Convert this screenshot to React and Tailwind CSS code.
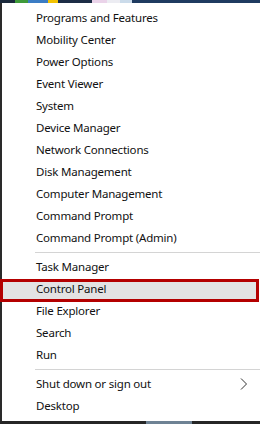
const groups = [
  [
    'Programs and Features',
    'Mobility Center',
    'Power Options',
    'Event Viewer',
    'System',
    'Device Manager',
    'Network Connections',
    'Disk Management',
    'Computer Management',
    'Command Prompt',
    'Command Prompt (Admin)',
  ],
  ['Task Manager', 'Control Panel', 'File Explorer', 'Search', 'Run'],
  ['Shut down or sign out', 'Desktop'],
];

const strip = [
  ['w-[15px]', 'bg-[#1b2a3c]'],
  ['w-[13px]', 'bg-[#3f9a3a]'],
  ['w-[20px]', 'bg-[#3b7cc4]'],
  ['w-[10px]', 'bg-[#f2c200]'],
  ['w-[34px]', 'bg-[#1c2d46]'],
  ['w-[15px]', 'bg-[#ead3e9]'],
  ['w-[13px]', 'bg-[#ececf2]'],
  ['w-[12px]', 'bg-[#cbdbea]'],
  ['flex-1', 'bg-[#1f3b60]'],
];

const MenuItem = ({ label }) => {
  const highlighted = label === 'Control Panel';
  const hasArrow = label === 'Shut down or sign out';
  return (
    <div className="relative flex h-[22px] items-center pl-[34px] pr-[12px]">
      {highlighted ? (
        <span className="absolute left-[-2px] right-[1px] top-[1px] bottom-[-2px] border-[3px] border-[#b40000] bg-[#e3e3e3]" />
      ) : null}
      <span className="relative flex-1 text-[11.5px] tracking-[-0.2px] text-[#111]">{label}</span>
      {hasArrow ? (
        <svg width="8" height="12" viewBox="0 0 8 12" className="relative">
          <path d="M1 0.5 L6.5 6 L1 11.5" fill="none" stroke="#333" strokeWidth="1" />
        </svg>
      ) : null}
    </div>
  );
};

export default function App() {
  return (
    <div className="flex h-[424px] w-[260px] flex-col bg-white" style={{ fontFamily: '"Noto Sans", "Open Sans", sans-serif' }}>
      <div className="flex h-[3px]">
        {strip.map(([w, bg], i) => (
          <div key={i} className={`${w} ${bg}`} />
        ))}
      </div>
      <div className="flex flex-1 flex-col border-l-2 border-[#2a2a2a] pt-[4px]">
        {groups.map((items, gi) => (
          <div key={gi}>
            {gi > 0 ? (
              <div className="flex h-[7px] items-center pl-[33px]">
                <div className="h-px flex-1 bg-[#d4d4d4]" />
              </div>
            ) : null}
            {items.map((label) => (
              <MenuItem key={label} label={label} />
            ))}
          </div>
        ))}
      </div>
      <div className="flex h-[3px] bg-[#262626]">
        <div className="w-[146px]" />
        <div className="w-[46px] bg-[#6e8294]" />
      </div>
    </div>
  );
}
